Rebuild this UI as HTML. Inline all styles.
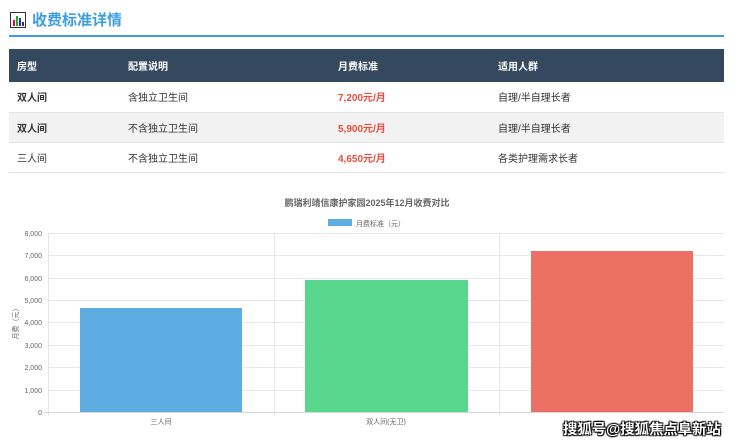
<!DOCTYPE html>
<html><head><meta charset="utf-8"><style>
*{margin:0;padding:0;box-sizing:border-box}
body{width:740px;height:442px;background:#fff;font-family:"Liberation Sans","Noto Sans CJK SC",sans-serif;position:relative;overflow:hidden;color:#333}
.t{position:absolute;left:10px;top:9px;font-size:15px;font-weight:bold;color:#3c9ee0;display:flex;align-items:center}
.line{position:absolute;left:9px;top:35px;width:715px;height:2px;background:#3c9ee0}
table{position:absolute;left:9px;top:49px;width:715px;border-collapse:collapse;font-size:10px;table-layout:fixed}
th{background:#34495e;color:#fff;height:33px;text-align:left;font-weight:bold}
td{height:30px;border-bottom:1px solid #e4e4e4}
tr.g td{background:#f2f2f2}
th,td{padding:0}
th:nth-child(1),td:nth-child(1){padding-left:8px;width:119px}
th:nth-child(2),td:nth-child(2){width:210px}
th:nth-child(3),td:nth-child(3){width:160px}
.p{color:#e74c3c;font-weight:bold}
.b{font-weight:bold}
.wm{position:absolute;left:563px;top:418px;font-size:14.4px;color:#fff;text-shadow:1px 1px 1px #000,-1px -1px 1px #000,1px -1px 1px #000,-1px 1px 1px #000;font-weight:bold;white-space:nowrap}
</style></head><body>
<div class="t"><svg width="16" height="16" viewBox="0 0 16 16" style="margin-right:6px"><rect x="0.5" y="0.5" width="15" height="15" fill="#fff" stroke="#333"/><rect x="3" y="8" width="2" height="6" fill="#e03"/><rect x="6" y="4" width="2" height="10" fill="#2a2"/><rect x="9" y="6" width="2" height="8" fill="#23c"/><rect x="12" y="10" width="2" height="4" fill="#333"/></svg>收费标准详情</div>
<div class="line"></div>
<table>
<tr><th>房型</th><th>配置说明</th><th>月费标准</th><th>适用人群</th></tr>
<tr><td class="b">双人间</td><td>含独立卫生间</td><td class="p">7,200元/月</td><td>自理/半自理长者</td></tr>
<tr class="g"><td class="b">双人间</td><td>不含独立卫生间</td><td class="p">5,900元/月</td><td>自理/半自理长者</td></tr>
<tr><td>三人间</td><td>不含独立卫生间</td><td class="p">4,650元/月</td><td>各类护理需求长者</td></tr>
</table>
<svg style="position:absolute;left:0;top:0" width="740" height="442" font-family="Liberation Sans,Noto Sans CJK SC,sans-serif">
<text x="367" y="206" font-size="9" font-weight="bold" fill="#666" text-anchor="middle">鹏瑞利靖信康护家园2025年12月收费对比</text>
<rect x="328" y="219" width="24" height="7" fill="#5dade2"/>
<text x="356" y="226" font-size="7" fill="#666">月费标准（元）</text>
<g stroke="#e8e8e8" stroke-width="1">
<line x1="48" y1="233.5" x2="724" y2="233.5"/><line x1="48" y1="255.5" x2="724" y2="255.5"/><line x1="48" y1="278.5" x2="724" y2="278.5"/><line x1="48" y1="300.5" x2="724" y2="300.5"/><line x1="48" y1="322.5" x2="724" y2="322.5"/><line x1="48" y1="345.5" x2="724" y2="345.5"/><line x1="48" y1="367.5" x2="724" y2="367.5"/><line x1="48" y1="390.5" x2="724" y2="390.5"/>
<line x1="48.5" y1="233" x2="48.5" y2="416"/><line x1="274.5" y1="233" x2="274.5" y2="416"/><line x1="499.5" y1="233" x2="499.5" y2="416"/>
</g>
<line x1="44" y1="412.5" x2="724" y2="412.5" stroke="#d8d8d8"/>
<rect x="80" y="308" width="162" height="104" fill="#5dade2"/>
<rect x="305" y="280" width="163" height="132" fill="#58d68d"/>
<rect x="531" y="251" width="162" height="161" fill="#ec7063"/>
<g font-size="7" fill="#666" text-anchor="end">
<text x="42" y="236">8,000</text><text x="42" y="258">7,000</text><text x="42" y="281">6,000</text><text x="42" y="303">5,000</text><text x="42" y="325">4,000</text><text x="42" y="348">3,000</text><text x="42" y="370">2,000</text><text x="42" y="393">1,000</text><text x="42" y="415">0</text>
</g>
<g font-size="7" fill="#666" text-anchor="middle">
<text x="161" y="424">三人间</text><text x="386" y="424">双人间(无卫)</text>
</g>
<text transform="translate(18,322) rotate(-90)" font-size="7" fill="#666" text-anchor="middle">月费（元）</text>
</svg>
<div class="wm">搜狐号@搜狐焦点阜新站</div>
</body></html>
